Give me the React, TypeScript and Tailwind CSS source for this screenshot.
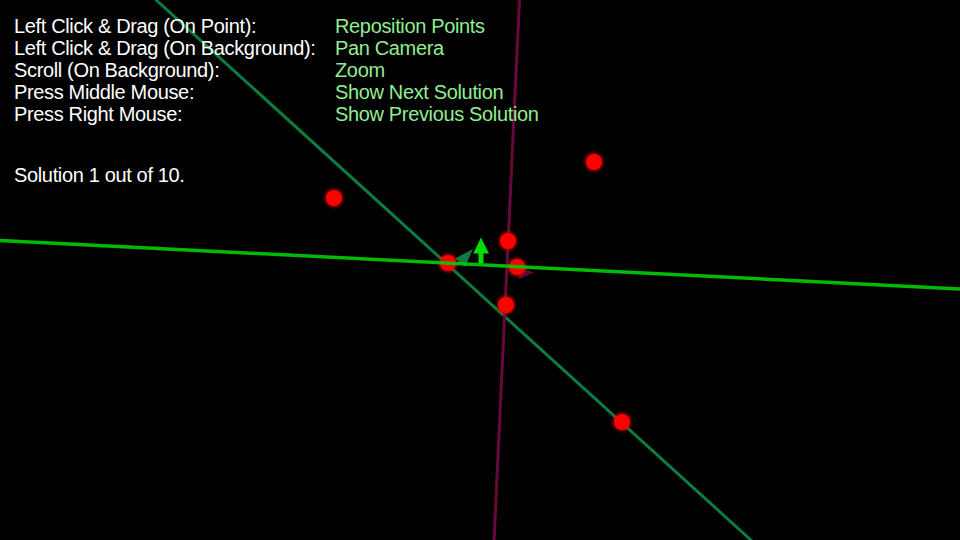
const controls = [
  ["Left Click & Drag (On Point):", "Reposition Points"],
  ["Left Click & Drag (On Background):", "Pan Camera"],
  ["Scroll (On Background):", "Zoom"],
  ["Press Middle Mouse:", "Show Next Solution"],
  ["Press Right Mouse:", "Show Previous Solution"],
]

const points = [
  [334, 198],
  [594, 162],
  [508, 241],
  [448, 263],
  [517, 267],
  [506, 305],
  [622, 422],
]

function Scene() {
  return (
    <svg className="absolute inset-0" width={960} height={540} viewBox="0 0 960 540">
      <defs>
        <filter id="glow" x="-50%" y="-50%" width="200%" height="200%">
          <feGaussianBlur stdDeviation="1.6" />
        </filter>
      </defs>
      <line x1={155} y1={-1} x2={752} y2={541} stroke="#0b7d3e" strokeWidth={3} />
      <line x1={519.5} y1={-1} x2={494} y2={541} stroke="#650a38" strokeWidth={3} />

      {/* solution direction markers */}
      <polygon points="455,258.5 473,249 465,267" fill="#127846" />
      <polygon points="519,266 534,272.5 519,279" fill="#5c0a33" />

      {points.map(([x, y]) => (
        <g key={`${x}-${y}`}>
          <circle cx={x} cy={y} r={9.5} fill="#ff0000" opacity={0.55} filter="url(#glow)" />
          <circle cx={x} cy={y} r={8} fill="#ff0000" />
        </g>
      ))}

      <line x1={0} y1={240.5} x2={960} y2={289} stroke="#00cc00" strokeWidth={3.5} opacity={0.92} />
      <rect x={478.5} y={251} width={5} height={12} fill="#00dd00" />
      <polygon points="481,237.5 473.3,253.5 489,253.5" fill="#00dd00" />
    </svg>
  )
}

export default function App() {
  return (
    <div className="relative h-[540px] w-[960px] overflow-hidden bg-black font-['Liberation_Sans',Arial,sans-serif] text-[20px] leading-[22px] tracking-[-0.35px]">
      <Scene />
      <div className="relative pl-[14px] pt-[15px]">
        <div className="grid grid-cols-[321px_auto]">
          {controls.map(([action, effect]) => (
            <div key={action} className="contents">
              <span className="text-white">{action}</span>
              <span className="text-[#90ee90]">{effect}</span>
            </div>
          ))}
        </div>
        <p className="mt-[39px] text-white">Solution 1 out of 10.</p>
      </div>
    </div>
  )
}
